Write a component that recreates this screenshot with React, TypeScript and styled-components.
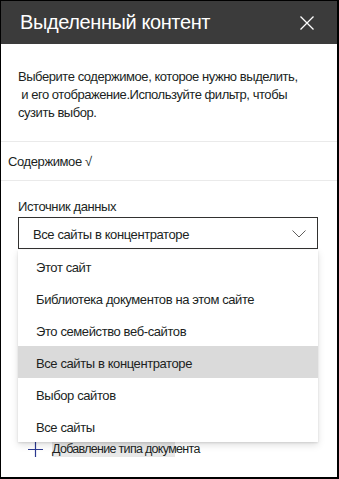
import React from 'react'
import styled, { createGlobalStyle } from 'styled-components'

const GlobalStyle = createGlobalStyle`
  html, body { margin: 0; padding: 0; background: #fff; }
  body { font-family: "Liberation Sans", Arial, sans-serif; color: #201f1e; }
`

const Frame = styled.div`
  width: 339px;
  height: 479px;
  box-sizing: border-box;
  border-style: solid;
  border-color: #000;
  border-width: 1px 2px 2px 1px;
  overflow: hidden;
  background: #fff;
`

const Header = styled.header`
  height: 43px;
  background: #3b3b3b;
  display: flex;
  align-items: center;
  justify-content: space-between;
  padding: 0 23px 0 19px;
`

const Title = styled.h1`
  margin: 0;
  font-size: 20px;
  font-weight: 400;
  color: #fff;
  letter-spacing: -0.4px;
`

const CloseButton = styled.button`
  border: 0;
  background: none;
  padding: 0;
  width: 14px;
  height: 14px;
  display: flex;
  cursor: pointer;
`

const Description = styled.p`
  margin: 0;
  padding: 24px 18px 19px 17px;
  font-size: 13px;
  line-height: 18px;
  letter-spacing: -0.45px;
  border-bottom: 1px solid #eaeaea;
`

const GroupHeader = styled.div`
  height: 38px;
  display: flex;
  align-items: center;
  padding-left: 7px;
  font-size: 13px;
  letter-spacing: -0.4px;
  border-bottom: 1px solid #eaeaea;
`

const Section = styled.div`
  padding: 17px 19px 0 17px;
`

const Label = styled.label`
  display: block;
  font-size: 13px;
  line-height: 18px;
  letter-spacing: -0.4px;
  margin-bottom: 1px;
`

const SelectWrap = styled.div`
  position: relative;
`

const SelectBox = styled.div`
  height: 32px;
  box-sizing: border-box;
  border: 1px solid #323130;
  display: flex;
  align-items: center;
  justify-content: space-between;
  padding: 2px 11px 0 14px;
  font-size: 13px;
  letter-spacing: -0.4px;
`

const Options = styled.ul`
  position: absolute;
  left: 0;
  right: 0;
  top: 33px;
  margin: 0;
  padding: 0;
  list-style: none;
  background: #fff;
  box-shadow: 0 3.2px 7.2px rgba(0, 0, 0, 0.13), 0 0.6px 1.8px rgba(0, 0, 0, 0.11);
  z-index: 2;
`

const Option = styled.li<{ $selected?: boolean }>`
  height: 32px;
  display: flex;
  align-items: center;
  padding: 3px 0 0 18px;
  box-sizing: border-box;
  font-size: 13px;
  letter-spacing: -0.4px;
  background: ${p => (p.$selected ? '#dadada' : 'transparent')};
`

const AddButton = styled.button`
  margin: 192px 0 0 10px;
  border: 0;
  background: none;
  padding: 0;
  display: flex;
  align-items: center;
  gap: 9px;
  font-family: inherit;
  font-size: 12.5px;
  letter-spacing: -0.7px;
  color: #201f1e;
  cursor: pointer;
`

const AddText = styled.span`
  display: inline-block;
  height: 16px;
  line-height: 16px;
  background: linear-gradient(#e8e8e8, #e8e8e8) no-repeat;
  background-size: 123px 100%;
`

const options = [
  'Этот сайт',
  'Библиотека документов на этом сайте',
  'Это семейство веб-сайтов',
  'Все сайты в концентраторе',
  'Выбор сайтов',
  'Все сайты',
]

export default function App() {
  return (
    <Frame>
      <GlobalStyle />
      <Header>
        <Title>Выделенный контент</Title>
        <CloseButton aria-label="Закрыть">
          <svg width="14" height="14" viewBox="0 0 14 14">
            <path d="M0.5 0.5L13.5 13.5M13.5 0.5L0.5 13.5" stroke="#fff" strokeWidth="1.3" fill="none" />
          </svg>
        </CloseButton>
      </Header>

      <Description>
        Выберите содержимое, которое нужно выделить,
        <br />
        &nbsp;и его отображение.Используйте фильтр, чтобы
        <br />
        сузить выбор.
      </Description>

      <GroupHeader>Содержимое √</GroupHeader>

      <Section>
        <Label>Источник данных</Label>
        <SelectWrap>
          <SelectBox>
            <span>Все сайты в концентраторе</span>
            <svg width="14" height="8" viewBox="0 0 14 8">
              <path d="M0.5 0.5L7 7L13.5 0.5" stroke="#605e5c" strokeWidth="1" fill="none" />
            </svg>
          </SelectBox>
          <Options>
            {options.map((o, i) => (
              <Option key={o} $selected={i === 3}>{o}</Option>
            ))}
          </Options>
        </SelectWrap>
        <AddButton>
          <svg width="15" height="15" viewBox="0 0 15 15">
            <path d="M7.5 0V15M0 7.5H15" stroke="#2b3990" strokeWidth="1.2" fill="none" />
          </svg>
          <AddText>Добавление типа документа</AddText>
        </AddButton>
      </Section>
    </Frame>
  )
}
